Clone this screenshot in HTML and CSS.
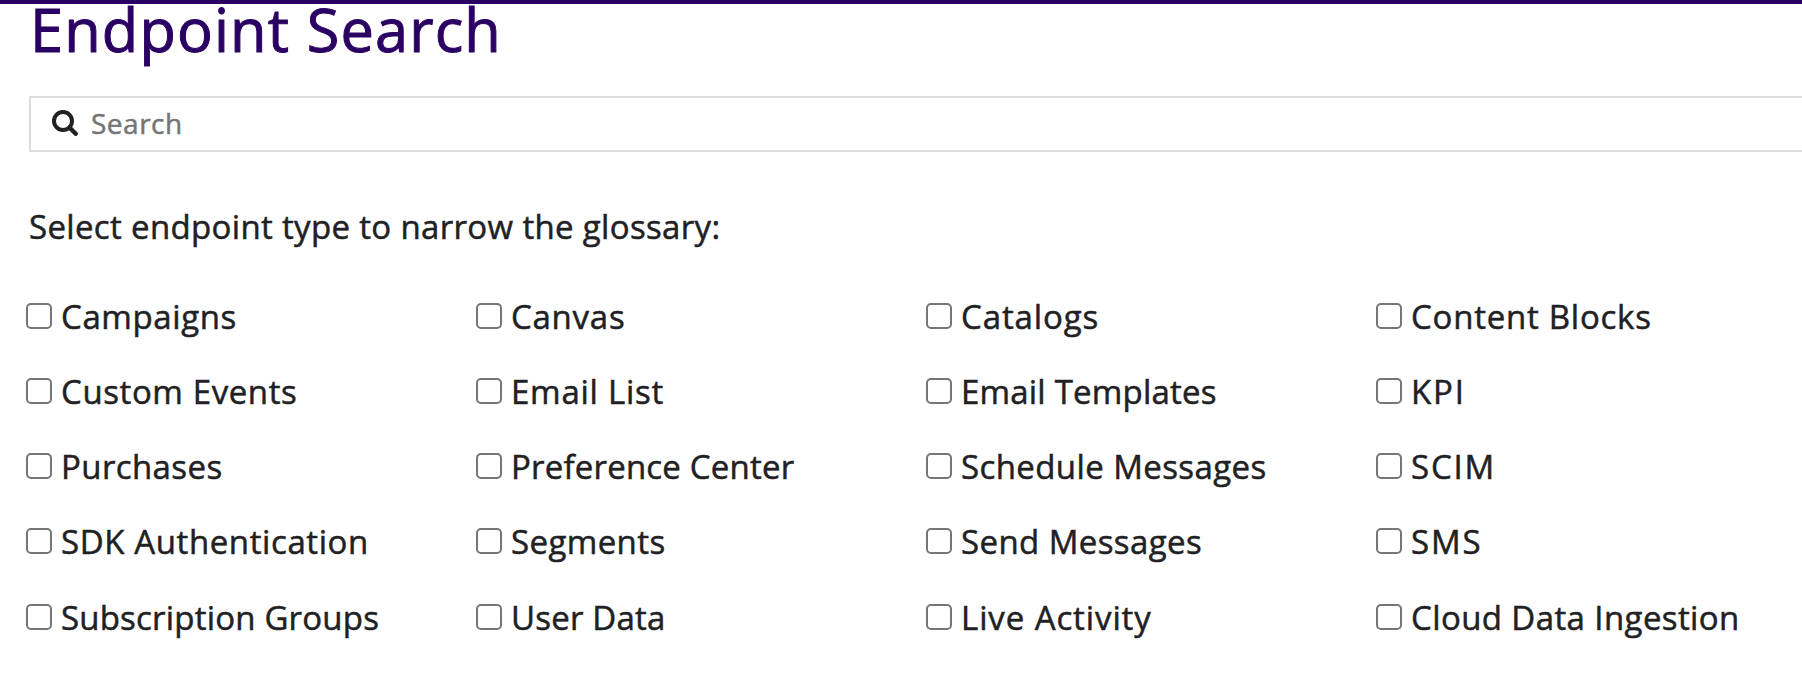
FILE: index.html
```html
<!DOCTYPE html>
<html lang="en">
<head>
<meta charset="utf-8">
<title>Endpoint Search</title>
<link rel="stylesheet" href="styles.css">
</head>
<body>
<main class="page">
  <h1 class="title">Endpoint Search</h1>
  <div class="search">
    <svg class="search-icon" viewBox="0 0 26 26" aria-hidden="true">
      <circle cx="11" cy="11" r="9" fill="none" stroke="currentColor" stroke-width="4"/>
      <path d="M17.6 17.6 L23.7 23.7" fill="none" stroke="currentColor" stroke-width="4.4" stroke-linecap="round"/>
    </svg>
    <input class="search-input" type="text" placeholder="Search" aria-label="Search">
  </div>
  <p class="prompt">Select endpoint type to narrow the glossary:</p>
  <div class="filters">
    <label class="filter medium"><input class="box" type="checkbox"><span>Campaigns</span></label>
    <label class="filter loose"><input class="box" type="checkbox"><span>Canvas</span></label>
    <label class="filter wide"><input class="box" type="checkbox"><span>Catalogs</span></label>
    <label class="filter loose"><input class="box" type="checkbox"><span>Content Blocks</span></label>
    <label class="filter medium"><input class="box" type="checkbox"><span>Custom Events</span></label>
    <label class="filter loose"><input class="box" type="checkbox"><span>Email List</span></label>
    <label class="filter tight"><input class="box" type="checkbox"><span>Email Templates</span></label>
    <label class="filter caps"><input class="box" type="checkbox"><span>KPI</span></label>
    <label class="filter"><input class="box" type="checkbox"><span>Purchases</span></label>
    <label class="filter tight"><input class="box" type="checkbox"><span>Preference Center</span></label>
    <label class="filter"><input class="box" type="checkbox"><span>Schedule Messages</span></label>
    <label class="filter caps"><input class="box" type="checkbox"><span>SCIM</span></label>
    <label class="filter medium"><input class="box" type="checkbox"><span>SDK Authentication</span></label>
    <label class="filter"><input class="box" type="checkbox"><span>Segments</span></label>
    <label class="filter"><input class="box" type="checkbox"><span>Send Messages</span></label>
    <label class="filter caps"><input class="box" type="checkbox"><span>SMS</span></label>
    <label class="filter tight"><input class="box" type="checkbox"><span>Subscription Groups</span></label>
    <label class="filter tight"><input class="box" type="checkbox"><span>User Data</span></label>
    <label class="filter wide"><input class="box" type="checkbox"><span>Live Activity</span></label>
    <label class="filter"><input class="box" type="checkbox"><span>Cloud Data Ingestion</span></label>
  </div>
</main>
</body>
</html>
```
FILE: styles.css
```css
* { box-sizing: border-box; }

body {
  margin: 0;
  background: #fff;
  color: #212123;
  font-family: "Open Sans", sans-serif;
  overflow: hidden;
}

.page {
  border-top: 4px solid #2a0062;
  font-size: 33px;
  line-height: 40px;
  -webkit-text-stroke: 0.5px currentColor;
}

.title {
  margin: 0 0 42px 30px;
  color: #2a0062;
  font-size: 59.5px;
  font-weight: 400;
  line-height: 50px;
  letter-spacing: 1.15px;
  -webkit-text-stroke-width: 1px;
}

.search {
  display: flex;
  align-items: center;
  height: 56px;
  margin-left: 29px;
  padding-left: 21px;
  border: 2px solid #dcdce1;
  border-right: 0;
}

.search-icon {
  flex: none;
  width: 26px;
  height: 26px;
  margin: 0 13px 2px 0;
}

.search-input {
  flex: 1;
  height: 48px;
  margin-bottom: 2px;
  padding: 0;
  border: 0;
  outline: 0;
  background: transparent;
  color: inherit;
  font: 28px/40px "Open Sans", sans-serif;
  letter-spacing: 0.5px;
}

.search-input::placeholder { color: #757575; }

.prompt {
  margin: 55px 0 32px 29px;
  letter-spacing: 0.34px;
}

.filters {
  display: grid;
  grid-template-columns: repeat(4, 450px);
  grid-auto-rows: 75.25px;
  padding-left: 26px;
}

.filter {
  display: flex;
  align-items: center;
  gap: 9px;
  white-space: nowrap;
  letter-spacing: 0.4px;
}

.filter.tight { letter-spacing: 0.2px; }
.filter.medium { letter-spacing: 0.6px; }
.filter.loose { letter-spacing: 0.75px; }
.filter.wide { letter-spacing: 0.9px; }
.filter.caps { letter-spacing: 1.8px; }

.box {
  appearance: none;
  flex: none;
  width: 26px;
  height: 26px;
  margin: 0 0 2px;
  border: 2px solid #767676;
  border-radius: 5px;
  background: #fff;
}
```
